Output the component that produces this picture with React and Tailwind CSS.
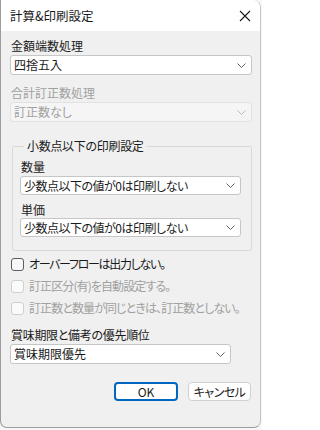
import React from "react";

const Chevron = ({ color = "#606060" }) => (
  <svg width="9" height="5" viewBox="0 0 9 5" className="shrink-0">
    <path d="M0.5 0.5 L4.5 4.5 L8.5 0.5" fill="none" stroke={color} strokeWidth="1" />
  </svg>
);

const Select = ({ value, disabled, className = "", textClass = "" }) => (
  <div
    className={
      "flex items-center justify-between pl-[3px] pr-[5px] rounded-[3px] border " +
      (disabled
        ? "bg-[#f5f5f5] border-[#e2e2e2] text-[#a0a0a0] "
        : "bg-white border-[#c6c6c6] text-[#1a1a1a] ") +
      className
    }
  >
    <span className={"leading-[16px] whitespace-nowrap " + textClass}>{value}</span>
    <Chevron color={disabled ? "#b8b8b8" : "#606060"} />
  </div>
);

const Check = ({ label, disabled, textClass = "" }) => (
  <div className="flex items-center h-[22px]">
    <div
      className={
        "w-[13px] h-[13px] shrink-0 ml-[1px] rounded-[3px] border " +
        (disabled ? "border-[#cfcfcf] bg-[#fafafa]" : "border-[#5d5d5d] bg-[#f7f7f7]")
      }
    />
    <span
      className={
        "ml-[5px] leading-[16px] whitespace-nowrap " +
        (disabled ? "text-[#a0a0a0] " : "text-[#1a1a1a] ") +
        textClass
      }
    >
      {label}
    </span>
  </div>
);

export default function App() {
  return (
    <div className="w-[262px] h-[430px] bg-[#f7f7f7] font-['Noto_Sans_CJK_JP',sans-serif] text-[12px] [font-feature-settings:'palt'] text-[#1a1a1a]">
      <div className="w-[261px] h-[428px] flex flex-col bg-[#f0f0f0] border-l border-r border-b border-l-[#9c9c9c] border-r-[#c4c4c4] border-b-[#9c9c9c] rounded-tr-[8px] rounded-b-[7px] overflow-hidden">
        <div className="h-[31px] shrink-0 bg-white flex items-center justify-between pl-[9px] pr-[8px]">
          <span className="leading-[16px] text-[12.5px]">計算&amp;印刷設定</span>
          <svg width="12" height="12" viewBox="0 0 12 12" className="mr-[1px]">
            <path d="M1 1 L11 11 M11 1 L1 11" stroke="#1a1a1a" strokeWidth="1.1" />
          </svg>
        </div>
        <div className="flex flex-col pl-[9px] pr-[8px] pt-[7px]">
          <div className="leading-[16px] pl-[1px]">金額端数処理</div>
          <Select value="四捨五入" className="h-[20px] mt-[1px]" />
          <div className="leading-[16px] pl-[1px] mt-[10px] text-[#a0a0a0]">合計訂正数処理</div>
          <Select value="訂正数なし" disabled className="h-[20px] mt-[1px]" />

          <fieldset className="mt-[16px] ml-[2px] border border-[#d9d9d9] rounded-[2px] pl-[7px] pr-[10px] pb-[13px]">
            <legend className="ml-[4px] px-[3px] leading-[16px] tracking-[-0.3px]">小数点以下の印刷設定</legend>
            <div className="leading-[16px] pt-[5px] pl-[1px]">数量</div>
            <Select value="少数点以下の値が0は印刷しない" className="h-[19px] mt-[1px]" textClass="tracking-[-0.5px]" />
            <div className="leading-[16px] mt-[7px] pl-[1px]">単価</div>
            <Select value="少数点以下の値が0は印刷しない" className="h-[19px] mt-[0px]" textClass="tracking-[-0.5px]" />
          </fieldset>

          <div className="mt-[2px] flex flex-col">
            <Check label="オーバーフローは出力しない。" textClass="tracking-[-1.3px]" />
            <Check label="訂正区分(有)を自動設定する。" disabled textClass="tracking-[-0.9px]" />
            <Check label="訂正数と数量が同じときは、訂正数としない。" disabled textClass="tracking-[-0.9px]" />
          </div>

          <div className="leading-[16px] mt-[8px] pl-[1px] tracking-[-0.3px]">賞味期限と備考の優先順位</div>
          <div className="pr-[21px]">
            <Select value="賞味期限優先" className="h-[20px] mt-[1px]" />
          </div>

          <div className="flex justify-end gap-[10px] mt-[18px] pr-[1px]">
            <button className="w-[64px] h-[19px] rounded-[4px] bg-white border-2 border-[#0067c0] leading-[14px] text-[#1a1a1a]">
              OK
            </button>
            <button className="w-[63px] h-[19px] rounded-[4px] bg-white border border-[#d0d0d0] leading-[16px] text-[#1a1a1a] tracking-[-0.5px]">
              キャンセル
            </button>
          </div>
        </div>
      </div>
    </div>
  );
}
